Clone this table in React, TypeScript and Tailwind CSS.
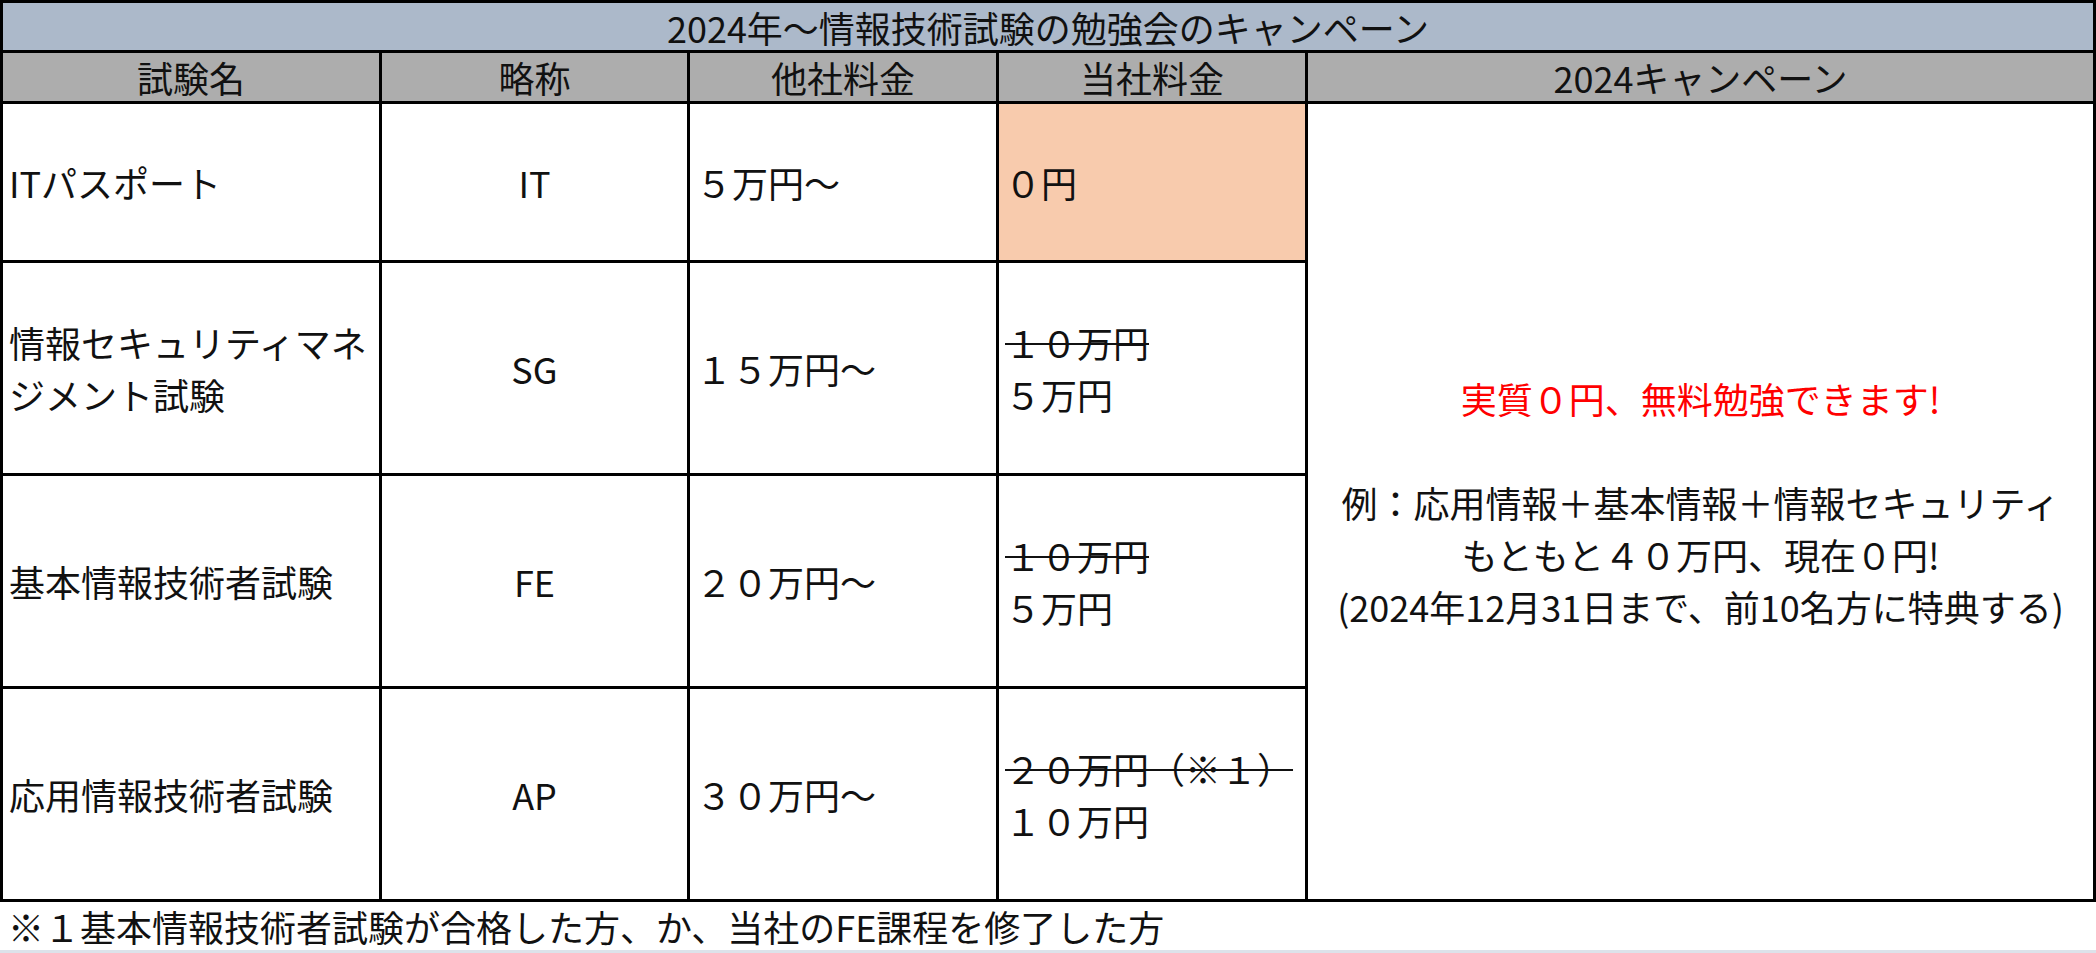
import React from "react";

const headers = ["試験名", "略称", "他社料金", "当社料金", "2024キャンペーン"];

function Cell({ children, className = "" }: { children: React.ReactNode; className?: string }) {
  return (
    <div className={`bg-white flex items-center px-[6px] leading-[52px] ${className}`}>
      <div>{children}</div>
    </div>
  );
}

function Price({ old, now }: { old: string; now: string }) {
  return (
    <Cell>
      <div className="line-through decoration-[2px] whitespace-nowrap">{old}</div>
      <div className="whitespace-nowrap">{now}</div>
    </Cell>
  );
}

export default function App() {
  return (
    <div className="w-[2096px] h-[953px] bg-white text-[#111111] font-['Noto_Sans_CJK_JP',sans-serif] text-[36px]">
      <div className="grid grid-cols-[376px_305px_306px_306px_785px] grid-rows-[47px_48px_156px_210px_210px_210px] gap-[3px] bg-black p-[3px]">
        <div className="col-span-5 bg-[#acb9ca] flex items-center justify-center leading-none">
          2024年～情報技術試験の勉強会のキャンペーン
        </div>
        {headers.map((h) => (
          <div key={h} className="bg-[#adadad] flex items-center justify-center leading-none">
            {h}
          </div>
        ))}

        <Cell>ITパスポート</Cell>
        <Cell className="justify-center">IT</Cell>
        <Cell>５万円～</Cell>
        <div className="bg-[#f8cbad] flex items-center px-[6px] leading-[52px]">
          <div>０円</div>
        </div>
        <div className="row-span-4 bg-white flex flex-col items-center justify-center text-center leading-[52px] whitespace-nowrap">
          <div className="text-[#ff0000]">実質０円、無料勉強できます!</div>
          <div className="h-[52px]"></div>
          <div>例：応用情報＋基本情報＋情報セキュリティ</div>
          <div>もともと４０万円、現在０円!</div>
          <div>(2024年12月31日まで、前10名方に特典する)</div>
        </div>

        <Cell>情報セキュリティマネジメント試験</Cell>
        <Cell className="justify-center">SG</Cell>
        <Cell>１５万円～</Cell>
        <Price old="１０万円" now="５万円" />

        <Cell>基本情報技術者試験</Cell>
        <Cell className="justify-center">FE</Cell>
        <Cell>２０万円～</Cell>
        <Price old="１０万円" now="５万円" />

        <Cell>応用情報技術者試験</Cell>
        <Cell className="justify-center">AP</Cell>
        <Cell>３０万円～</Cell>
        <Price old="２０万円（※１）" now="１０万円" />
      </div>
      <div className="h-[51px] flex items-center pl-[8px] border-b-[3px] border-[#dde2ea] leading-none">
        ※１基本情報技術者試験が合格した方、か、当社のFE課程を修了した方
      </div>
    </div>
  );
}
